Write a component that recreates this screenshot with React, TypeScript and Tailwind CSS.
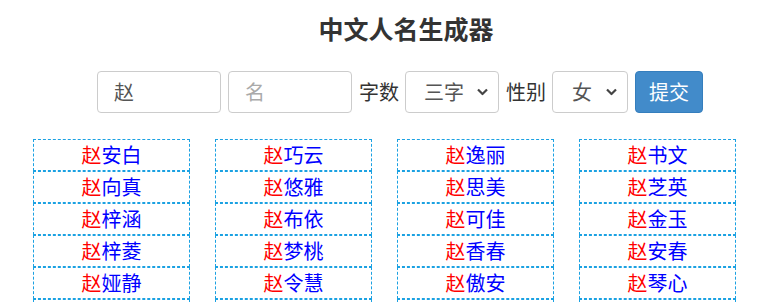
const names: string[][] = [
  ["安白", "巧云", "逸丽", "书文"],
  ["向真", "悠雅", "思美", "芝英"],
  ["梓涵", "布依", "可佳", "金玉"],
  ["梓菱", "梦桃", "香春", "安春"],
  ["娅静", "令慧", "傲安", "琴心"],
];

const Chevron = () => (
  <svg
    width="11"
    height="7"
    viewBox="0 0 11 7"
    className="pointer-events-none absolute right-[10px] top-1/2 -translate-y-1/2"
  >
    <path d="M1 1l4.5 4.5L10 1" fill="none" stroke="#444" strokeWidth="2.2" />
  </svg>
);

const FakeSelect = ({ value, width }: { value: string; width: string }) => (
  <div
    className={`relative h-[42px] ${width} rounded-[4px] border border-[#ccc] bg-white flex items-center justify-center pr-[16px] text-[20px] text-[#555]`}
  >
    {value}
    <Chevron />
  </div>
);

export default function App() {
  return (
    <div
      className="w-[778px] h-[303px] overflow-hidden bg-white"
      style={{ fontFamily: '"Noto Sans CJK SC", "Noto Sans", sans-serif' }}
    >
      <div className="flex justify-center pl-[34px] pt-[11px]">
        <h1 className="text-[25px] leading-[34px] font-bold text-[#333]">
          中文人名生成器
        </h1>
      </div>

      <div className="flex items-center gap-[7px] pl-[97px] mt-[26px] text-[#333]">
        <div className="h-[42px] w-[124px] rounded-[4px] border border-[#ccc] flex items-center pl-[16px] text-[20px] text-[#555]">
          赵
        </div>
        <div className="h-[42px] w-[124px] rounded-[4px] border border-[#ccc] flex items-center pl-[16px] text-[20px] text-[#aaa]">
          名
        </div>
        <span className="text-[20px] leading-none mr-[-1px]">字数</span>
        <FakeSelect value="三字" width="w-[94px]" />
        <span className="text-[20px] leading-none mr-[-1px]">性别</span>
        <FakeSelect value="女" width="w-[76px]" />
        <button className="h-[42px] w-[68px] rounded-[4px] bg-[#428bca] border border-[#357ebd] text-white text-[20px]">
          提交
        </button>
      </div>

      <div className="grid grid-cols-[repeat(4,157px)] gap-x-[25px] pl-[33px] mt-[26px]">
        {names.flatMap((row, r) =>
          row.map((n, c) => (
            <div
              key={`${r}-${c}`}
              className="h-[32px] border border-dashed border-[#1ba1e2] flex items-center justify-center text-[20px] leading-none"
            >
              <span className="text-[#f00]">赵</span>
              <span className="text-[#00f]">{n}</span>
            </div>
          ))
        )}
        {[0, 1, 2, 3].map((c) => (
          <div
            key={`empty-${c}`}
            className="h-[32px] border border-dashed border-[#1ba1e2]"
          />
        ))}
      </div>
    </div>
  );
}
